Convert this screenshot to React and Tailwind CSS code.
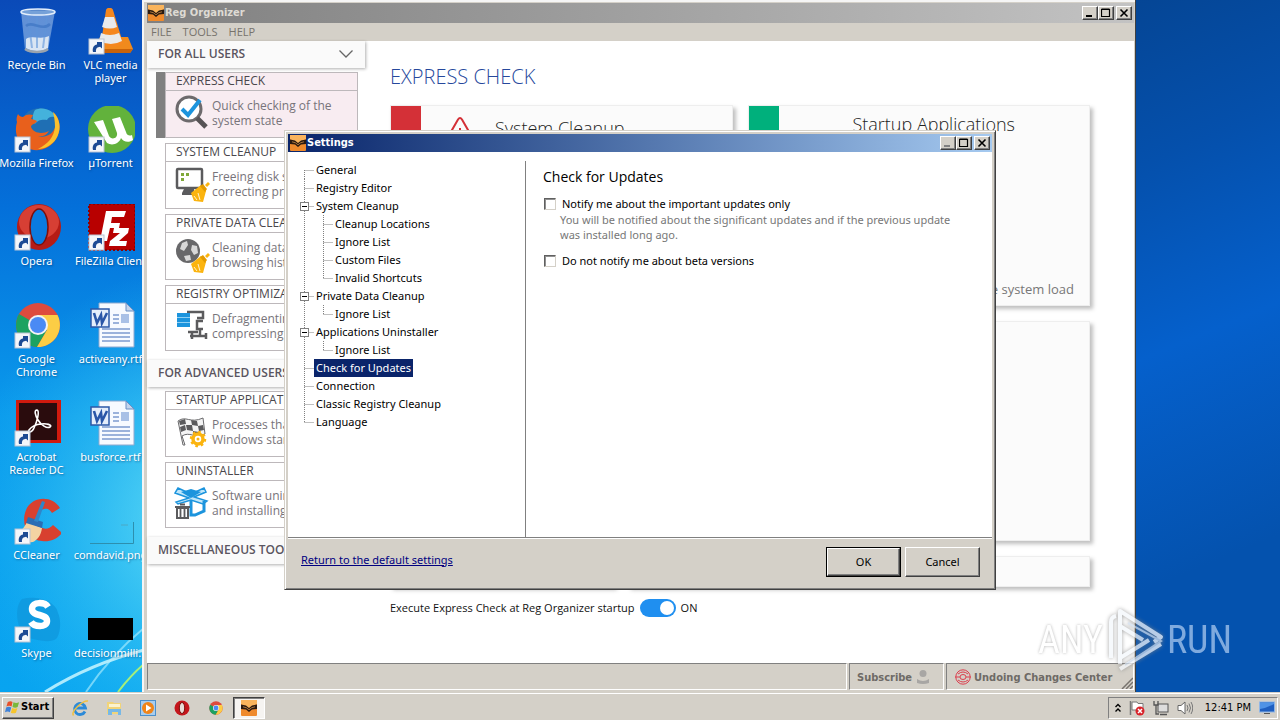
import React from "react";

const raised =
  "border border-t-white border-l-white border-r-[#404040] border-b-[#404040] bg-[#d4d0c8] shadow-[inset_-1px_-1px_0_#808080]";
const sunken = "border border-t-[#808080] border-l-[#808080] border-r-white border-b-white";
const tahoma = "font-['DejaVu_Sans_Condensed','DejaVu_Sans',sans-serif]";
const segoe = "font-['Open_Sans','Noto_Sans',sans-serif]";
const noto = "font-['Noto_Sans','Open_Sans',sans-serif]";

/* ---------- desktop icons ---------- */

function Arrow() {
  return (
    <g transform="translate(2 31)">
      <rect x="0" y="0" width="15" height="15" fill="#f4f6fa" stroke="#b9c3d3" strokeWidth="1" />
      <path d="M4 13C3 9 5 6 8 5.6V3h5v6.6l-1.9-1.8C8.500 8 6.500 9.500 7 13z" fill="#1c4a94" />
    </g>
  );
}

const art = {
  bin: (
    <>
      <path d="M8 3 12 42c6 3.500 18 3.500 23 0L42 3z" fill="#b9d3f2" fillOpacity=".5" />
      <path d="M13 31c6-4 15 1 23-3l-1 12c-5 4-16 4-22 0z" fill="#eef3f8" fillOpacity=".85" />
      <path d="M15 8l4 32M24 8v32M34 8l-4 32" stroke="#5f94d8" strokeOpacity=".6" strokeWidth="2" fill="none" />
      <path d="M13 18c6-6 16 6 24-2" stroke="#376fc0" strokeOpacity=".6" strokeWidth="2.500" fill="none" />
      <ellipse cx="25" cy="4" rx="17" ry="3" fill="#7fa8d8" fillOpacity=".7" stroke="#e3eefb" strokeWidth="1.500" />
      <path d="M12 41c6 4 18 4 23 0" stroke="#9aa3ad" strokeWidth="2.500" fill="none" />
    </>
  ),
  vlc: (
    <>
      <path d="M13 29h28l5 12-3 4H11l-3-4z" fill="#f08a1d" />
      <path d="M8 41h38l-3 4H11z" fill="#c9630a" />
      <path d="M21 2c1-3 6-3 7 0l10 33c-3 5-19 5-22 0z" transform="translate(-2 0)" fill="#f5871f" />
      <path d="M18 9h9l3 10q-7 3-15 0z" fill="#e9eaec" />
      <path d="M14 25q9 4 18 0l3 8q-11 6-23 0z" fill="#e9eaec" />
    </>
  ),
  firefox: (
    <>
      <circle cx="27" cy="22" r="20" fill="#1f6fb4" />
      <path d="M22 4c8-4 18 0 22 8-4-2-8-2-10 2-4-1-10 0-12 4-3-4-3-9 0-14z" fill="#44b2dc" />
      <path d="M5 8c1 2 3 3 5 3 3-3 7-3 10-2l-2 4c2 0 4 1 6 2-1 3-6 3-6 6 3 7 12 7 18 4-3 5-7 6-12 5 9 3 18-3 19-12 1-5-1-9-3-12 7 6 9 17 3 27S24 47 14 42 1 26 4 16c-1-3 0-6 1-8z" fill="#e8601c" />
      <path d="M40 6c7 6 9 17 3 27-4 6-11 10-18 10 10-5 16-12 17-22 0-6-1-11-2-15z" fill="#fbc02d" />
    </>
  ),
  utorrent: (
    <>
      <circle cx="25" cy="23" r="24" fill="#62b23c" />
      <path d="M7 16l9-2 6 16c2 4 9 3 8-3l-5-14 8-2 6 15c1 4 4 4 6 3l1 5c-4 3-10 2-12-2-2 6-9 8-14 5z" fill="#fff" />
    </>
  ),
  opera: (
    <>
      <ellipse cx="26" cy="23" rx="22" ry="23" fill="#b51c16" />
      <ellipse cx="26" cy="18" rx="20" ry="17" fill="#e0493c" fillOpacity=".8" />
      <ellipse cx="26" cy="23" rx="9" ry="18" fill="#0a7be0" stroke="#7d0f0b" strokeWidth="1.500" />
    </>
  ),
  filezilla: (
    <>
      <rect x="2" y="0" width="46" height="46" fill="#b80000" stroke="#8c0000" strokeWidth="2" strokeDasharray="2 2" />
      <path d="M13 37 19 7h20l-2 6H25l-1 6h9l-1 5H23l-3 13z" fill="#fff" />
      <path d="M27 24h15l-1 5-9 8h8l-1 5H22l1-5 10-8h-7z" fill="#fff" />
    </>
  ),
  chrome: (
    <>
      <circle cx="25" cy="23" r="22" fill="#dd4b3e" />
      <path d="M25 23 6 12A22 22 0 0 0 24 45l10-17z" fill="#1ba261" />
      <path d="M25 13h19.500A22 22 0 0 1 24 45l10-17z" fill="#fccd45" />
      <circle cx="25" cy="23" r="10" fill="#f3f3f3" />
      <circle cx="25" cy="23" r="8" fill="#4a8af4" />
    </>
  ),
  word: (
    <>
      <path d="M12 1h27l8 8v36H12z" fill="#f7faff" stroke="#8fa9cf" />
      <path d="M39 1v8h8z" fill="#c5d5ec" stroke="#6d8fc4" />
      <path d="M15 27h28M15 31h28M15 35h28M15 39h28M26 13h6M26 17h6M26 21h6" stroke="#7d9ad0" strokeWidth="1.300" />
      <rect x="34" y="12" width="8" height="9" fill="#a9c0e6" />
      <rect x="4" y="7" width="18" height="18" fill="#e4edfb" stroke="#2d58a8" strokeWidth="1.500" />
      <path d="M7 11l3 10 4-8 1 8 5-10" fill="none" stroke="#2a56a8" strokeWidth="2.600" />
    </>
  ),
  acrobat: (
    <>
      <rect x="3" y="0" width="45" height="43" fill="#d01a0e" />
      <rect x="6" y="3" width="38" height="37" fill="#2a0c0d" />
      <path d="M24 10c-3 0-2 5 1 10 3 5 9 9 12 7s-4-4-9-3c-5 0-10 3-12 6s3 3 5-2c3-6 6-17 3-18z" fill="none" stroke="#fff" strokeWidth="1.600" />
    </>
  ),
  ccleaner: (
    <>
      <path d="M47 10C39-3 19-2 13 12c-6 15 3 30 16 31 8 1 15-2 20-8l-9-8c-4 5-12 5-15-1-3-7 0-14 6-15 4-1 6 1 8 4z" fill="#d8402f" />
      <path d="M3 34c5 0 8-4 11-10l15 6c-1 8-5 12-9 14-6 1-13 0-17-3z" fill="#f3d3a2" />
      <path d="M15 19l15 5-1 6-16-5z" fill="#2a6db4" />
      <path d="M29 3l3 1-7 20-4-1z" fill="#2f86c9" />
    </>
  ),
  png: (
    <>
      <path d="M3 45.500h43.500V24" fill="none" stroke="#2d8fae" strokeWidth="1" />
      <path d="M34 27h7" stroke="#4da8c4" strokeWidth="1" />
    </>
  ),
  skype: (
    <>
      <path d="M9 3c14-4 34 2 36 14 3 6 3 18-1 25-6 6-20 2-28 0C4 38 0 12 9 3z" fill="#0f97dc" fillOpacity=".75" />
      <path d="M35 11c-3-5-16-6-16 2 0 8 15 4 15 12 0 7-13 6-16 1" fill="none" stroke="#fff" strokeWidth="6.500" />
    </>
  ),
  black: <path d="M1 22h45v22H1z" fill="#000" />,
};

const desktopIcons = [
  ["bin", "Recycle Bin", false],
  ["vlc", "VLC media player", true],
  ["firefox", "Mozilla Firefox", true],
  ["utorrent", "µTorrent", true],
  ["opera", "Opera", true],
  ["filezilla", "FileZilla Client", true],
  ["chrome", "Google Chrome", true],
  ["word", "activeany.rtf", false],
  ["acrobat", "Acrobat Reader DC", true],
  ["word", "busforce.rtf", false],
  ["ccleaner", "CCleaner", true],
  ["png", "comdavid.png", false],
  ["skype", "Skype", true],
  ["black", "decisionmilli...", false],
];

function DesktopIcon({ kind, label, shortcut }) {
  const twoLines = ["VLC media player", "Google Chrome", "Acrobat Reader DC"].includes(label);
  return (
    <li className="flex h-[98px] flex-col items-center pt-2">
      <svg viewBox="0 0 48 48" className="h-12 w-12 shrink-0" aria-hidden="true">
        {art[kind]}
        {shortcut && <Arrow />}
      </svg>
      <span
        className={`mt-0.5 text-center text-[11px] leading-[13px] text-white [text-shadow:1px_1px_2px_#00306080] ${noto} ${
          twoLines ? "w-[62px]" : "whitespace-nowrap"
        }`}
      >
        {label}
      </span>
    </li>
  );
}

function Wallpaper() {
  return (
    <svg className="absolute inset-0 h-full w-full" viewBox="0 0 1280 692" preserveAspectRatio="none" aria-hidden="true">
      <defs>
        <linearGradient id="sky" x1="0" y1="0" x2="0" y2="1">
          <stop offset="0" stopColor="#0a4ab8" />
          <stop offset=".3" stopColor="#0470da" />
          <stop offset=".6" stopColor="#0a9aec" />
          <stop offset="1" stopColor="#08a4f0" />
        </linearGradient>
        <radialGradient id="glow" gradientUnits="userSpaceOnUse" cx="220" cy="520" r="260">
          <stop offset="0" stopColor="#7ff0f8" stopOpacity=".9" />
          <stop offset="1" stopColor="#2fc8f5" stopOpacity="0" />
        </radialGradient>
        <linearGradient id="deep" x1="0" y1="0" x2=".35" y2="1">
          <stop offset="0" stopColor="#053a7c" />
          <stop offset=".45" stopColor="#0550ac" />
          <stop offset=".7" stopColor="#0560cc" />
          <stop offset="1" stopColor="#0452ae" />
        </linearGradient>
      </defs>
      <rect width="700" height="692" fill="url(#sky)" />
      <rect width="700" height="692" fill="url(#glow)" />
      <rect x="700" width="580" height="692" fill="url(#deep)" />
      <path d="M45 692Q90 664 144 650" stroke="#c9f6ff" strokeWidth="3" strokeOpacity=".85" fill="none" />
      <path d="M86 692Q110 656 144 628" stroke="#b8f2ff" strokeWidth="2" strokeOpacity=".6" fill="none" />
      <path d="M118 692Q130 676 144 664" stroke="#a6ef7a" strokeWidth="2" fill="none" />
    </svg>
  );
}

/* ---------- shared window parts ---------- */

function AppMark() {
  return (
    <svg viewBox="0 0 16 16" className="h-4 w-4 shrink-0" aria-hidden="true">
      <rect width="16" height="16" rx="1" fill="#ef8a2c" />
      <path d="M0 0h16v4L8 8 0 4z" fill="#f9b45c" />
      <path d="M0 4.500l5 1 3 2.500 3-2.500 5-1V9l-5 .5L8 12 5 9.500 0 9z" fill="#2b1a10" />
      <path d="M2 6.800l3.500 1L8 9.800l2.500-2L14 6.800" fill="none" stroke="#c98a48" strokeWidth=".8" />
    </svg>
  );
}

function CaptionButtons({ dim }) {
  const base = `flex h-[14px] w-4 items-center justify-center ${raised}`;
  return (
    <div className="flex items-center pr-0.5">
      <button aria-label="Minimize" className={base}>
        <svg viewBox="0 0 10 10" className="h-[10px] w-[10px]"><path d="M1 7h6v2H1z" fill={dim ? "#808080" : "#000"} /></svg>
      </button>
      <button aria-label="Maximize" className={base}>
        <svg viewBox="0 0 10 10" className="h-[10px] w-[10px]"><path d="M.5 1.500h8v7h-8zM.5 1h8" fill="none" stroke="#000" strokeWidth="1.200" /></svg>
      </button>
      <button aria-label="Close" className={`${base} ml-0.5`}>
        <svg viewBox="0 0 10 10" className="h-[10px] w-[10px]"><path d="M1.500 1.500l7 7M8.500 1.500l-7 7" stroke="#000" strokeWidth="1.600" /></svg>
      </button>
    </div>
  );
}

/* ---------- sidebar ---------- */

const broom = (
  <g>
    <path d="M17 27l10-8 5 6-3 11-9-1z" fill="#fbb40f" />
    <path d="M26 20l3-2 4 5-2 3z" fill="#e39a00" />
    <path d="M31 19l3-3 2 2-3 3z" fill="#fbb40f" />
    <path d="M20 30l3 4M24 27l2 7" stroke="#fff" strokeWidth=".8" />
  </g>
);

const sideArt = {
  check: (
    <>
      <circle cx="15" cy="14" r="12" fill="#fff" stroke="#6d6a6c" strokeWidth="3" />
      <path d="M23 23l9 9" stroke="#565355" strokeWidth="5" />
      <path d="M8 14l6 6L26 5" fill="none" stroke="#1c94dd" strokeWidth="4" />
    </>
  ),
  cleanup: (
    <>
      <rect x="3" y="3" width="25" height="19" rx="1" fill="#fff" stroke="#5b5b5d" strokeWidth="2.500" />
      <path d="M10 23h10v4h3v2H8v-2z" fill="#5b5b5d" />
      <path d="M7 7h3v3H7zM12 7h3v3h-3zM7 12h3v3H7z" fill="#80a83a" />
      {broom}
    </>
  ),
  privacy: (
    <>
      <circle cx="14" cy="14" r="12" fill="#68686a" />
      <path d="M8 6l5-2 1 4-4 6-4-2zM18 8l5 1 1 7-4 2-3-5zM10 19l6-1 1 5-5 1z" fill="#d8d8d8" />
      {broom}
    </>
  ),
  registry: (
    <>
      <path d="M13 4h16v6h-6M29 13h-6v8h6M26 21v7M16 28h17M18 25v6M32 25v6M14 24h10" fill="none" stroke="#5b5b5d" strokeWidth="2.500" />
      <path d="M3 5h13v4H3zM3 10h13v4H3zM3 15h13v4H3z" fill="#1c94dd" />
      <path d="M3 9.500h13M3 14.500h13" stroke="#8fd0f4" />
    </>
  ),
  startup: (
    <>
      <path d="M4 7c8-6 12 3 25-3l2 16c-11 5-15-3-23 2l3 9H9z" fill="#f4f4f4" stroke="#6a6a6c" />
      <path d="M5 7l6-2 1 5-6 1zM17 6l6 1 1 5-6-1zM12 11l6 0 1 6-6-1zM24 12l5-1 1 5-5 1zM6 13l5-2 1 5-5 2zM19 17l6 1 0 4-6-1z" fill="#5b5b5d" />
      <circle cx="24" cy="25" r="5" fill="#fff" stroke="#fbb40f" strokeWidth="3.500" />
      <circle cx="24" cy="25" r="7" fill="none" stroke="#fbb40f" strokeWidth="2.500" strokeDasharray="2.500 3" />
      <circle cx="24" cy="25" r="1.500" fill="#fbb40f" />
    </>
  ),
  uninstall: (
    <>
      <path d="M17 9 4 3 1 8l14 5-13 4 2 2 13-4 12 4 4-3-13-4 12-5-2-4z" fill="#bfe6fa" stroke="#1c94dd" strokeWidth="1.500" />
      <path d="M7 7l10-3 10 3-10 6z" fill="#1c94dd" />
      <path d="M17 16v14h4l9-4V16" fill="none" stroke="#1c94dd" strokeWidth="3" />
      <path d="M3 23h11v10H3z" fill="#fff" stroke="#5b5b5d" strokeWidth="2" />
      <path d="M1 22h15M6 19.500h5M6.500 24v8M10.500 24v8" stroke="#5b5b5d" strokeWidth="1.800" />
    </>
  ),
};

function SideHeader({ children, chevron }) {
  return (
    <h2 className="flex h-[27px] items-center justify-between bg-[#fafafa] pr-3 pb-px pl-[11px] text-[12px] font-semibold whitespace-nowrap text-[#5a5560] shadow-[1px_1px_3px_#00000050]">
      {children}
      {chevron && (
        <svg viewBox="0 0 14 8" className="h-2 w-[14px]" aria-hidden="true"><path d="M.5.500 7 7 13.500.500" fill="none" stroke="#666" strokeWidth="1.300" /></svg>
      )}
    </h2>
  );
}

function SideCard({ icon, title, lines, active }) {
  return (
    <li className="flex pr-[7px] pl-[9px]">
      <span className={`w-[9px] shrink-0 ${active ? "bg-[#808080]" : ""}`} />
      <a href="#" className={`block h-[66px] grow border border-[#bdb8bb] ${active ? "bg-[#f8ecf1]" : "bg-white"}`}>
        <h3 className="h-[18px] border-b border-[#bdb8bb] pl-[10px] text-[12px] leading-4 whitespace-nowrap text-[#4a474c]">{title}</h3>
        <span className="flex items-center gap-0.5 pt-1 pl-2">
          <svg viewBox="0 0 36 36" className="h-9 w-9 shrink-0" aria-hidden="true">{sideArt[icon]}</svg>
          <span className="text-[12px] leading-[15px] whitespace-nowrap text-[#77747a]">
            {lines[0]}
            <br />
            {lines[1]}
          </span>
        </span>
      </a>
    </li>
  );
}

function Sidebar() {
  return (
    <nav className="w-[218px] shrink-0">
      <SideHeader chevron>FOR ALL USERS</SideHeader>
      <ul className="mt-1 flex flex-col gap-[5px]">
        <SideCard active icon="check" title="EXPRESS CHECK" lines={["Quick checking of the", "system state"]} />
        <SideCard icon="cleanup" title="SYSTEM CLEANUP" lines={["Freeing disk space,", "correcting problems"]} />
        <SideCard icon="privacy" title="PRIVATE DATA CLEANUP" lines={["Cleaning data,", "browsing history"]} />
        <SideCard icon="registry" title="REGISTRY OPTIMIZATION" lines={["Defragmenting,", "compressing"]} />
      </ul>
      <div className="mt-[9px]"><SideHeader>FOR ADVANCED USERS</SideHeader></div>
      <ul className="mt-1 flex flex-col gap-[5px]">
        <SideCard icon="startup" title="STARTUP APPLICATIONS" lines={["Processes that", "Windows starts"]} />
        <SideCard icon="uninstall" title="UNINSTALLER" lines={["Software uninstall", "and installing"]} />
      </ul>
      <div className="mt-[9px]"><SideHeader>MISCELLANEOUS TOOLS</SideHeader></div>
    </nav>
  );
}

/* ---------- main window ---------- */

const card = "border border-[#eee] bg-[#fbfbfb] shadow-[3px_3px_4px_#00000040]";

function MainPane() {
  return (
    <main className="flex grow flex-col pt-[21px] pr-11 pl-[25px]">
      <h1 className="text-[20px] leading-[30px] font-light text-[#26489c]">EXPRESS CHECK</h1>
      <div className="mt-[13px] grid grid-cols-2 gap-[15px]">
        <section className={`h-[201px] ${card} flex`}>
          <span className="w-[30px] shrink-0 bg-[#d43037]" />
          <svg viewBox="0 0 22 20" className="mt-[11px] ml-7 h-5 w-[22px]" aria-hidden="true">
            <path d="M9 2.500q2-3 4 0l8 14q1 2.500-2 2.500H3q-3 0-2-2.500z" fill="none" stroke="#d43037" strokeWidth="2" />
            <path d="M11 11v6" stroke="#d43037" strokeWidth="2" />
          </svg>
          <h2 className="pt-2 pl-6 text-[18px] leading-7 font-light text-[#222]">System Cleanup</h2>
        </section>
        <section className={`h-[201px] ${card} flex`}>
          <span className="w-[30px] shrink-0 bg-[#00b07c]" />
          <div className="flex grow flex-col justify-between pt-1 pb-1">
            <h2 className="text-center text-[18px] leading-7 font-light text-[#222]">Startup Applications</h2>
            <p className="pr-[15px] text-right text-[13px] leading-6 text-[#777]">the system load</p>
          </div>
        </section>
      </div>
      <section className={`mt-[15px] h-[220px] ${card}`} />
      <div className="mt-[15px] flex gap-[14px]">
        <section className={`h-[31px] w-[224px] ${card}`} />
        <section className={`h-[31px] grow ${card}`} />
      </div>
      <label className="mt-3 flex items-center gap-[5px] text-[11px] leading-[18px] text-[#111]">
        Execute Express Check at Reg Organizer startup
        <input
          type="checkbox"
          role="switch"
          defaultChecked
          className="relative h-[18px] w-9 appearance-none rounded-full bg-[#1f8ff0] before:absolute before:top-0.5 before:right-0.5 before:h-[14px] before:w-[14px] before:rounded-full before:bg-white"
        />
        ON
      </label>
    </main>
  );
}

function MainWindow() {
  return (
    <div className="absolute top-0 right-36 bottom-0 left-[142px] flex flex-col border-r border-[#404040] bg-[#d4d0c8] pt-[3px] pr-px pb-0.5 pl-[5px] shadow-[inset_2px_2px_0_#f5f5f5]">
      <header className="flex h-5 shrink-0 items-center justify-between bg-linear-to-r from-[#808080] to-[#c3c3c3] pl-px">
        <div className="flex items-center gap-px text-[11px] font-bold text-[#dedbd4]">
          <AppMark />
          Reg Organizer
        </div>
        <CaptionButtons />
      </header>
      <nav className={`flex h-[18px] shrink-0 items-center gap-[11px] pl-1 text-[11px] text-[#77736c] ${segoe}`}>
        <button>FILE</button>
        <button>TOOLS</button>
        <button>HELP</button>
      </nav>
      <div className={`flex min-h-0 grow bg-white ${segoe}`}>
        <Sidebar />
        <MainPane />
      </div>
      <footer className="flex h-[27px] shrink-0 gap-0.5 text-[11px] font-bold text-[#6e6a66]">
        <div className={`grow ${sunken}`} />
        <div className={`flex w-[95px] items-center gap-1 pt-1 pl-[7px] ${sunken}`}>
          Subscribe
          <svg viewBox="0 0 14 16" className="mb-1 h-4 w-[14px]" aria-hidden="true"><circle cx="7" cy="4.500" r="3.500" fill="#a8a6a4" /><path d="M1 10q6 4 12 0v4q-6 2-12 0z" fill="#a8a6a4" /></svg>
        </div>
        <div className={`flex w-[188px] items-center gap-[3px] pl-2 ${sunken}`}>
          <svg viewBox="0 0 16 16" className="h-4 w-4 shrink-0" aria-hidden="true">
            <circle cx="8" cy="8" r="7.200" fill="none" stroke="#dc3e4e" />
            <ellipse cx="8" cy="8" rx="3" ry="2.500" fill="none" stroke="#dc3e4e" />
            <path d="M0 8h5M11 8h5M3 5q5-4 10 0M3 11q5 4 10 0" fill="none" stroke="#dc3e4e" />
          </svg>
          <span className="pt-1 whitespace-nowrap">Undoing Changes Center</span>
          <svg viewBox="0 0 12 12" className="ml-auto h-3 w-3 shrink-0 self-end" aria-hidden="true"><path d="M1 12 12 1M5 12l7-7M9 12l3-3" stroke="#77736e" strokeWidth="1.500" /></svg>
        </div>
      </footer>
    </div>
  );
}

/* ---------- settings dialog ---------- */

const tree = [
  { label: "General" },
  { label: "Registry Editor" },
  { label: "System Cleanup", children: ["Cleanup Locations", "Ignore List", "Custom Files", "Invalid Shortcuts"] },
  { label: "Private Data Cleanup", children: ["Ignore List"] },
  { label: "Applications Uninstaller", children: ["Ignore List"] },
  { label: "Check for Updates", selected: true },
  { label: "Connection" },
  { label: "Classic Registry Cleanup" },
  { label: "Language" },
];

const dots = { fill: "none", stroke: "#808080", strokeWidth: 1, strokeDasharray: "1 1" };

function RootGuide({ first, last, box }) {
  return (
    <svg viewBox="0 0 14 18" className="h-[18px] w-[14px] shrink-0" aria-hidden="true">
      <path d={`M4.500 ${first ? 9 : 0}V${last ? 9 : 18}M4.500 9.500H14`} {...dots} />
      {box && (
        <>
          <rect x=".5" y="5.500" width="8" height="8" fill="#fff" stroke="#808080" />
          <path d="M2 9.500h5" stroke="#000" />
        </>
      )}
    </svg>
  );
}

function ChildGuide({ last }) {
  return (
    <svg viewBox="0 0 33 18" className="h-[18px] w-[33px] shrink-0" aria-hidden="true">
      <path d={`M4.500 0V18M23.500 0V${last ? 9 : 18}M23.500 9.500H33`} {...dots} />
    </svg>
  );
}

function Tree() {
  return (
    <ul className="w-[238px] shrink-0 border-r border-[#808080] pl-3">
      {tree.map((n, i) => (
        <li key={n.label}>
          <button className="flex items-center">
            <RootGuide first={i === 0} last={i === tree.length - 1} box={!!n.children} />
            <span className={`px-0.5 leading-[18px] ${n.selected ? "bg-[#0a246a] text-white" : ""}`}>{n.label}</span>
          </button>
          {n.children && (
            <ul>
              {n.children.map((c, j) => (
                <li key={c}>
                  <button className="flex items-center">
                    <ChildGuide last={j === n.children.length - 1} />
                    <span className="px-0.5 leading-[18px]">{c}</span>
                  </button>
                </li>
              ))}
            </ul>
          )}
        </li>
      ))}
    </ul>
  );
}

const box =
  "h-3 w-3 shrink-0 appearance-none border border-t-[#606060] border-l-[#606060] border-r-[#d4d0c8] border-b-[#d4d0c8] bg-white shadow-[inset_1px_1px_0_#909090]";

function SettingsDialog() {
  return (
    <div
      role="dialog"
      aria-label="Settings"
      className="absolute top-[130px] left-[284px] w-[712px] border border-t-[#d4d0c8] border-l-[#d4d0c8] border-r-[#404040] border-b-[#404040] bg-[#d4d0c8] p-[3px] shadow-[inset_1px_1px_0_#fff,inset_-1px_-1px_0_#808080]"
    >
      <header className="flex h-[18px] items-center justify-between bg-linear-to-r from-[#0a246a] to-[#a6caf0] pl-0.5">
        <div className="flex items-center gap-px text-[11px] font-bold text-white">
          <AppMark />
          Settings
        </div>
        <CaptionButtons dim />
      </header>
      <div className={`flex min-h-[386px] border-b border-[#808080] bg-white pt-[9px] text-[11px] text-black ${noto}`}>
        <Tree />
        <div className="grow pt-1 pr-7 pl-[17px]">
          <h2 className={`text-[14px] leading-6 ${segoe}`}>Check for Updates</h2>
          <label className="mt-[7px] flex items-center gap-[6px] pl-px leading-4">
            <input type="checkbox" className={box} />
            Notify me about the important updates only
          </label>
          <p className="pl-[17px] leading-[15px] text-[#777]">
            You will be notified about the significant updates and if the previous update
            <br />
            was installed long ago.
          </p>
          <label className="mt-[11px] flex items-center gap-[6px] pl-px leading-4">
            <input type="checkbox" className={box} />
            Do not notify me about beta versions
          </label>
        </div>
      </div>
      <footer className={`flex items-center justify-between border-t border-white pt-2 pr-3 pb-[9px] pl-[13px] text-[11px] ${noto}`}>
        <a href="#" className="mb-1 text-[#000080] underline">Return to the default settings</a>
        <div className="flex gap-1">
          <button className="border border-black">
            <span className={`flex h-7 w-[73px] items-center justify-center ${raised}`}>OK</span>
          </button>
          <button className={`h-[30px] w-[75px] ${raised}`}>Cancel</button>
        </div>
      </footer>
    </div>
  );
}

/* ---------- taskbar ---------- */

function Taskbar() {
  return (
    <footer className="flex h-7 shrink-0 items-center justify-between border-t border-[#d4d0c8] bg-[#d4d0c8] pt-0.5 pr-0.5 pl-0.5 shadow-[inset_0_1px_0_#fff]">
      <div className="flex items-center">
        <button className={`flex h-[22px] w-[52px] items-center gap-px pl-0.5 text-[11px] font-bold text-black ${raised}`}>
          <svg viewBox="0 0 16 16" className="h-[15px] w-[15px] shrink-0" aria-hidden="true">
            <path d="M3 2q3-1.500 5 0L7 7Q4.500 5.500 1.500 7z" fill="#e8502a" />
            <path d="M9 2.500q3 1.500 6 0l-1.500 5Q11 9 8 7.500z" fill="#7ab83c" />
            <path d="M1.200 8q3-1.500 5.500 0l-1.500 5Q3 11.500 0 13z" fill="#3f82d8" />
            <path d="M7.700 8.500q3 1.500 5.500 0l-1.500 5q-3 1.500-5.500 0z" fill="#f7c52b" />
          </svg>
          Start
        </button>
        <div className="ml-[17px] flex items-center gap-4">
          <button aria-label="Internet Explorer">
            <svg viewBox="0 0 18 18" className="h-[18px] w-[18px]"><path d="M14 12.500A5.500 5.500 0 1 1 14.500 9H5" fill="none" stroke="#2c8ad8" strokeWidth="2.800" /><path d="M2.500 16.500C-1 13 12 1 17 2" fill="none" stroke="#f0c040" strokeWidth="1.500" /></svg>
          </button>
          <button aria-label="Explorer">
            <svg viewBox="0 0 18 18" className="h-[18px] w-[18px]"><path d="M2 3h6l1 1h7v11H2z" fill="#f1d479" /><path d="M4 5h11v3H4z" fill="#fbf3cf" /><path d="M3 10h13v6h-3v-3H7v3H3z" fill="#77b8e6" /></svg>
          </button>
          <button aria-label="Media Player">
            <svg viewBox="0 0 18 18" className="h-[18px] w-[18px]"><rect x="1.500" y="1.500" width="15" height="15" fill="#a8cdee" stroke="#4b8fcb" /><circle cx="9" cy="9" r="6" fill="#f08418" /><path d="M7 5.500v7L12.500 9z" fill="#fff" /></svg>
          </button>
          <button aria-label="Opera">
            <svg viewBox="0 0 18 18" className="h-[18px] w-[18px]"><circle cx="9" cy="9" r="7.500" fill="#c4161c" /><ellipse cx="9" cy="9" rx="2.700" ry="5.500" fill="#e8dcd8" stroke="#7d0f0b" /></svg>
          </button>
          <button aria-label="Chrome">
            <svg viewBox="2 0 46 46" className="h-[18px] w-[18px] p-0.5">{art.chrome}</svg>
          </button>
        </div>
        <button aria-label="Reg Organizer" className="ml-2 flex h-[22px] w-8 items-center justify-center border border-t-[#404040] border-l-[#404040] border-r-white border-b-white bg-[#f6f4f1] shadow-[inset_1px_1px_0_#808080]">
          <AppMark />
        </button>
      </div>
      <div className={`flex h-[22px] items-center gap-2 pr-0.5 pl-1.5 text-[11px] text-black ${sunken}`}>
        <svg viewBox="0 0 6 10" className="h-[10px] w-1.5" aria-hidden="true"><path d="M.5 4 3 1.500 5.500 4M.5 8.500 3 6l2.500 2.500" fill="none" stroke="#000" strokeWidth="1.400" /></svg>
        <svg viewBox="0 0 16 16" className="h-4 w-4" aria-hidden="true"><path d="M1.500 1v14" stroke="#777" strokeWidth="1.500" /><path d="M3 2h5l1 1.500h5V10H3z" fill="#fff" stroke="#777" /><circle cx="11" cy="11" r="4.500" fill="#d8232a" /><path d="M9 9l4 4M13 9l-4 4" stroke="#fff" strokeWidth="1.500" /></svg>
        <svg viewBox="0 0 16 16" className="h-4 w-4" aria-hidden="true"><rect x="5" y="4" width="10" height="8" fill="#ddd" stroke="#555" /><path d="M7 14.500h7M1 1v4h4V1M3 5v9h3" fill="none" stroke="#555" strokeWidth="1.300" /></svg>
        <svg viewBox="0 0 16 16" className="h-4 w-4" aria-hidden="true"><path d="M1 5.500h3L8 2v12l-4-3.500H1z" fill="#fff" stroke="#666" /><path d="M10 5q2 3 0 6M12 3.500q3 4.500 0 9M14 2q3.500 6 0 12" fill="none" stroke="#777" /></svg>
        <time className="ml-1 pt-0.5 whitespace-nowrap">12:41 PM</time>
        <svg viewBox="0 0 16 16" className="h-4 w-4" aria-hidden="true"><rect x=".5" y="2" width="15" height="10" fill="#1f5fc0" stroke="#8fb6e6" /><path d="M1 9Q8 8 15 4v-1.500H1z" fill="#4f93e6" /><path d="M5 13.500h6" stroke="#555" /></svg>
      </div>
    </footer>
  );
}

function Watermark() {
  return (
    <div
      className="pointer-events-none absolute right-12 bottom-[18px] flex items-center font-['Liberation_Sans_Narrow','Roboto_Condensed','Liberation_Sans',sans-serif] text-[38px] leading-[68px] opacity-75"
    >
      <span className="text-white [text-shadow:0_0_3px_#999]">ANY</span>
      <svg viewBox="0 0 64 68" className="h-[68px] w-16 drop-shadow-[0_0_2px_#888]" aria-hidden="true">
        <path d="M8 52V16q0-5 5-6M17 58V5L58 31 51 36M17 34V20L40 34M17 63 58 38M17 52 46 34" fill="none" stroke="#f4f7fb" strokeWidth="4" strokeLinejoin="round" />
        <path d="M25 17 58 35 22 59" fill="none" stroke="#cfdcec" strokeWidth="2" />
      </svg>
      <span className="text-[#a9c8ee]">RUN</span>
    </div>
  );
}

export default function App() {
  return (
    <div className={`flex h-screen flex-col overflow-hidden ${tahoma}`}>
      <div className="relative grow overflow-hidden">
        <Wallpaper />
        <ul className="relative grid w-[148px] grid-cols-[73px_75px]">
          {desktopIcons.map(([kind, label, shortcut]) => (
            <DesktopIcon key={label} kind={kind} label={label} shortcut={shortcut} />
          ))}
        </ul>
        <MainWindow />
        <SettingsDialog />
        <Watermark />
      </div>
      <Taskbar />
    </div>
  );
}
